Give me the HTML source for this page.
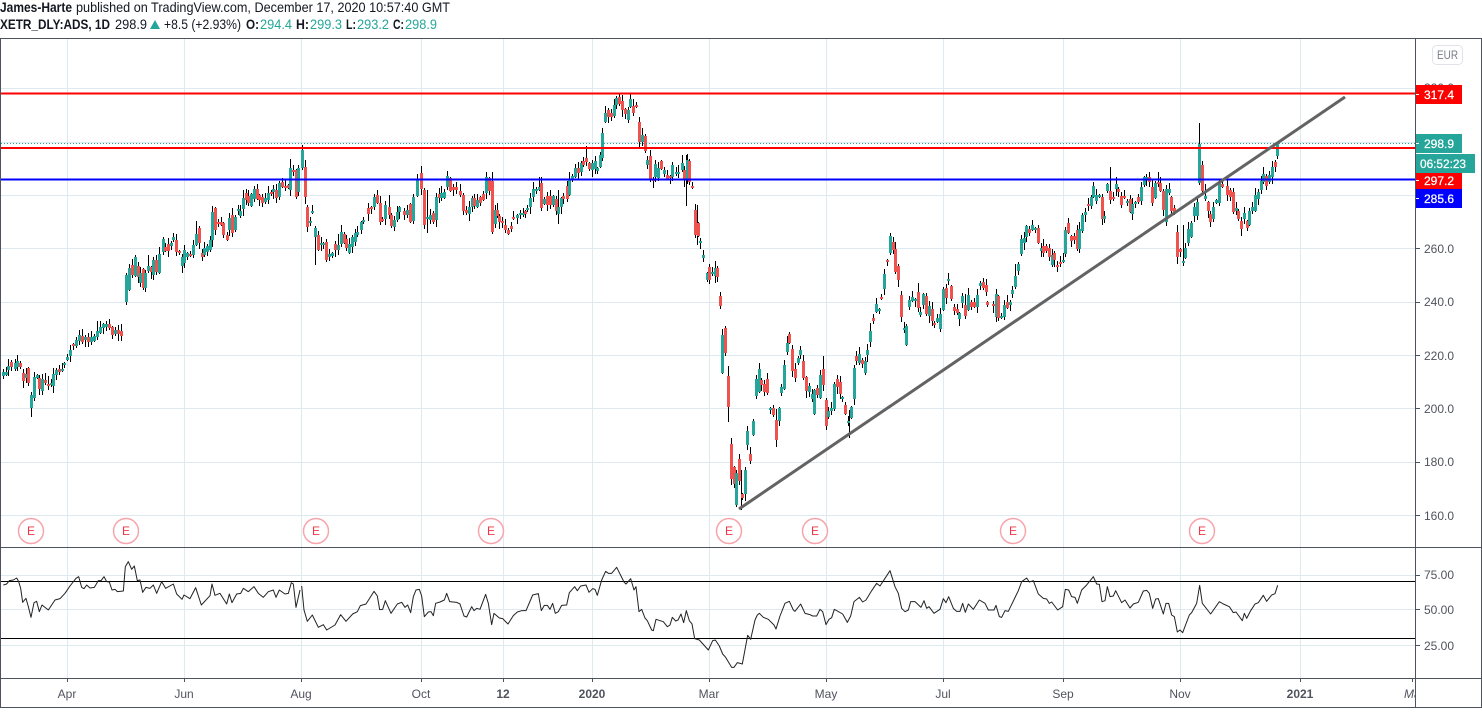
<!DOCTYPE html>
<html>
<head>
<meta charset="utf-8">
<title>XETR_DLY:ADS, 1D</title>
<style>
html,body{margin:0;padding:0;background:#fff;width:1482px;height:712px;overflow:hidden}
svg{display:block;position:absolute;left:0;top:0}
text{font-family:"Liberation Sans",sans-serif}
.ax{font-size:12px;fill:#50535e}
.tm{font-size:12px;fill:#50535e;text-anchor:middle}
.tg{font-size:12px;fill:#fff;stroke:#fff;stroke-width:.25}
.h{font-size:14px;fill:#131722}
.b{font-size:14px;fill:#131722;font-weight:bold}
.t{font-size:14px;fill:#26a69a}
.e{font-size:12px;fill:#f23645;text-anchor:middle}
</style>
</head>
<body>
<svg width="1482" height="712" viewBox="0 0 1482 712" xmlns="http://www.w3.org/2000/svg">
<!-- header -->
<text class="b" x="0" y="12" textLength="72" lengthAdjust="spacingAndGlyphs">James-Harte</text>
<text class="h" x="76" y="12" textLength="374" lengthAdjust="spacingAndGlyphs">published on TradingView.com, December 17, 2020 10:57:40 GMT</text>
<text class="b" x="0" y="29" textLength="110" lengthAdjust="spacingAndGlyphs">XETR_DLY:ADS, 1D</text>
<text class="h" x="115" y="29" textLength="32" lengthAdjust="spacingAndGlyphs">298.9</text>
<path d="M150 29L155 20L160 29Z" fill="#26a69a"/>
<text class="h" x="164" y="29" textLength="77" lengthAdjust="spacingAndGlyphs">+8.5 (+2.93%)</text>
<text class="b" x="246" y="29" textLength="13" lengthAdjust="spacingAndGlyphs">O:</text>
<text class="t" x="260" y="29" textLength="32" lengthAdjust="spacingAndGlyphs">294.4</text>
<text class="b" x="296" y="29" textLength="13" lengthAdjust="spacingAndGlyphs">H:</text>
<text class="t" x="310" y="29" textLength="32" lengthAdjust="spacingAndGlyphs">299.3</text>
<text class="b" x="346" y="29" textLength="10" lengthAdjust="spacingAndGlyphs">L:</text>
<text class="t" x="357" y="29" textLength="32" lengthAdjust="spacingAndGlyphs">293.2</text>
<text class="b" x="393" y="29" textLength="11" lengthAdjust="spacingAndGlyphs">C:</text>
<text class="t" x="405" y="29" textLength="32" lengthAdjust="spacingAndGlyphs">298.9</text>

<!-- grid -->
<g stroke="#dfe9f0" stroke-width="1" shape-rendering="crispEdges">
<path d="M67.5 39V678M184.5 39V678M301.5 39V678M421.5 39V678M503.5 39V678M592.5 39V678M709.5 39V678M826.5 39V678M943.5 39V678M1063.5 39V678M1180.5 39V678M1300.5 39V678"/>
<path d="M1 88.5H1415M1 142.5H1415M1 195.5H1415M1 248.5H1415M1 302.5H1415M1 355.5H1415M1 408.5H1415M1 462.5H1415M1 515.5H1415"/>
<path d="M1 575.5H1415M1 609.5H1415M1 645.5H1415"/>
</g>

<!-- long wicks sit under the candle bodies -->
<path d="M1199.5 123V150M31.5 397V417M728.5 370V422M736.5 480V506M741.5 470V510M686.5 155V206M1110.5 167V190M1177.5 225V262M1183.5 225V266M427.5 190V233M315.5 238V265M849.5 410V438M697.5 205V245M558.5 190V224" stroke="#000" stroke-width="1" fill="none" shape-rendering="crispEdges"/>
<!-- candles -->
<g id="c" shape-rendering="crispEdges"></g>

<!-- level lines -->
<path d="M1 143.5H1415" stroke="#26a69a" stroke-width="1" stroke-dasharray="1 2" fill="none"/>
<path d="M1 93.5H1415M1 148H1415" stroke="#ff0000" stroke-width="2" fill="none" shape-rendering="crispEdges"/>
<path d="M1 179.5H1415" stroke="#0000ff" stroke-width="2" fill="none" shape-rendering="crispEdges"/>
<path d="M739 509L1345 97" stroke="#636363" stroke-width="3" fill="none"/>

<!-- E markers -->
<g fill="#fff" stroke="#f7a5ad" stroke-width="1.5">
<circle cx="31" cy="531" r="12.5"/><circle cx="126" cy="531" r="12.5"/><circle cx="316" cy="531" r="12.5"/><circle cx="491" cy="531" r="12.5"/><circle cx="729" cy="531" r="12.5"/><circle cx="815" cy="531" r="12.5"/><circle cx="1013" cy="531" r="12.5"/><circle cx="1202" cy="531" r="12.5"/>
</g>
<g>
<text class="e" x="31" y="535">E</text><text class="e" x="126" y="535">E</text><text class="e" x="316" y="535">E</text><text class="e" x="491" y="535">E</text><text class="e" x="729" y="535">E</text><text class="e" x="815" y="535">E</text><text class="e" x="1013" y="535">E</text><text class="e" x="1202" y="535">E</text>
</g>

<!-- RSI -->
<path d="M1 581.5H1415M1 638.5H1415" stroke="#000" stroke-width="1" fill="none" shape-rendering="crispEdges"/>
<g fill="none" stroke="#222" stroke-width="1" stroke-linejoin="round">
<polyline vector-effect="non-scaling-stroke" transform="translate(0,510) scale(.33333)" points="10,225 20,222 28,212 40,210 50,204 56,215 62,235 68,277 78,265 85,290 93,322 102,278 110,274 118,305 126,285 145,300 165,270 180,266 195,250 210,228 228,205 236,200 245,232 252,236 260,225 270,234 283,232 295,212 303,212 312,200 320,215 328,216 336,240 345,238 352,245 370,243 376,170 385,155 395,178 403,168 412,212 420,210 428,247 438,232 450,235 460,225 470,250 485,215 497,235 520,222 530,252 546,268 552,255 570,266 587,233 604,285 630,257 636,222 645,256 660,250 680,282 688,252 696,278 710,252 722,250 730,235 745,245 762,230 775,250 790,262 805,245 820,240 828,262 838,240 855,252 865,250 874,218 880,222 888,292 900,240"/>
<polyline vector-effect="non-scaling-stroke" transform="translate(280,550) scale(.33333)" points="65,108 72,180 82,214 97,195 115,232 130,224 140,240 165,225 182,194 198,214 218,192 232,185 241,167 258,162 282,124 292,138 299,179 308,178 316,152 333,190 352,162 365,157 375,172 383,165 392,188 400,140 408,120 418,118 425,138 433,200 445,186 453,185 460,197 467,160 480,156 493,150 500,130 509,155 530,157 540,162 552,198 560,201 575,170 582,182 590,175 600,178 617,133 625,160 635,224 642,190 658,204 668,206 684,222 700,197 712,186 725,182 738,182 758,135 775,131 784,182 793,166 802,166 810,178 818,160 826,190 835,185 845,166 860,165 868,128 884,110 892,122 902,108 918,105 927,127 938,116 945,118 952,136 965,90 977,64 985,70 995,70 1010,52 1032,96 1038,102 1052,86 1062,120 1068,110 1077,185 1085,178 1095,204 1102,212 1115,240 1120,242 1128,208 1150,215 1162,230 1170,225 1177,202 1187,213 1194,210 1203,192 1211,218 1219,182 1228,212 1236,222 1244,266 1258,270 1285,300 1298,272 1306,270 1318,288 1328,312 1337,322 1355,352 1362,352 1372,338 1387,342 1403,256 1412,268 1425,210 1432,195 1438,190 1450,202 1465,208 1482,225 1488,237 1500,198"/>
<polyline vector-effect="non-scaling-stroke" transform="translate(780,550) scale(.33333)" points="0,198 15,160 28,154 40,180 45,184 62,162 75,190 90,194 98,198 110,198 120,178 128,185 138,224 147,208 155,203 163,178 188,192 202,217 212,198 222,155 238,142 248,156 258,150 275,122 290,100 300,108 315,85 330,62 345,110 355,130 365,175 375,185 385,180 392,155 405,155 423,172 432,152 440,175 447,170 462,190 480,178 490,146 498,158 506,140 520,175 530,184 540,184 548,160 556,187 565,162 580,178 598,150 615,160 625,180 642,180 648,166 658,200 665,202 675,182 685,184 715,122 725,95 740,84 748,96 760,92 775,132 790,145 800,147 808,160 815,156 833,180 848,170 856,118 866,120 875,140 885,142 892,160 905,120 920,105 940,80 950,102 958,103 966,155 975,152 982,110 990,140 1000,138 1007,122 1025,158 1035,150 1050,174 1060,162 1075,157 1090,123 1100,121 1108,130 1118,175 1127,147 1135,146 1150,192 1158,160 1166,160 1175,195 1183,200 1192,246 1200,240 1208,248 1228,195 1235,188 1250,160 1259,106 1267,160 1292,192 1318,155 1330,162 1348,170 1360,188 1368,186 1387,212 1393,190 1400,205 1412,182 1425,162 1435,158 1450,136 1460,154 1475,135 1485,131 1493,106"/>
</g>

<!-- time axis labels -->
<text class="tm" x="67" y="698">Apr</text>
<text class="tm" x="184" y="698">Jun</text>
<text class="tm" x="301" y="698">Aug</text>
<text class="tm" x="421" y="698">Oct</text>
<text class="tm" x="503" y="698" font-weight="bold">12</text>
<text class="tm" x="592" y="698" font-weight="bold">2020</text>
<text class="tm" x="709" y="698">Mar</text>
<text class="tm" x="826" y="698">May</text>
<text class="tm" x="943" y="698">Jul</text>
<text class="tm" x="1063" y="698">Sep</text>
<text class="tm" x="1180" y="698">Nov</text>
<text class="tm" x="1300" y="698" font-weight="bold">2021</text>
<text class="ax" x="1404" y="698" font-style="italic">Mar</text>
<rect x="1416" y="679" width="66" height="28" fill="#fff"/>
<rect x="1416" y="39" width="66" height="508" fill="#fff"/>

<!-- frame -->
<g stroke="#4c525e" stroke-width="1" fill="none" shape-rendering="crispEdges">
<path d="M0 38.5H1482M0.5 38V707M1415.5 38V707M0 547.5H1482M0 678.5H1482M0 707.5H1482M1481.5 38V708"/>
<path d="M67.5 678V682M184.5 678V682M301.5 678V682M421.5 678V682M503.5 678V682M592.5 678V682M709.5 678V682M826.5 678V682M943.5 678V682M1063.5 678V682M1180.5 678V682M1300.5 678V682M1412.5 678V682"/>
<path d="M1416 515.5H1420M1416 462.5H1420M1416 408.5H1420M1416 355.5H1420M1416 302.5H1420M1416 248.5H1420M1416 575.5H1420M1416 609.5H1420M1416 645.5H1420"/>
</g>

<!-- price axis -->
<rect x="1432.5" y="45.5" width="30" height="19" rx="4" fill="#fff" stroke="#e0e3eb"/>
<text x="1437" y="59" font-size="12" fill="#787b86" textLength="21" lengthAdjust="spacingAndGlyphs">EUR</text>
<text class="ax" x="1424" y="92">320.0</text>
<text class="ax" x="1424" y="253">260.0</text>
<text class="ax" x="1424" y="306">240.0</text>
<text class="ax" x="1424" y="360">220.0</text>
<text class="ax" x="1424" y="413">200.0</text>
<text class="ax" x="1424" y="466">180.0</text>
<text class="ax" x="1424" y="520">160.0</text>
<text class="ax" x="1424" y="579">75.00</text>
<text class="ax" x="1424" y="614">50.00</text>
<text class="ax" x="1424" y="650">25.00</text>

<rect x="1416" y="85" width="46" height="19" fill="#ff0000"/>
<text class="tg" x="1424" y="99">317.4</text>
<rect x="1416" y="170" width="46" height="19" fill="#ff0000"/>
<text class="tg" x="1424" y="185">297.2</text>
<rect x="1416" y="189" width="46" height="19" fill="#0000ff"/>
<text class="tg" x="1424" y="203">285.6</text>
<rect x="1416" y="134" width="46" height="19" fill="#26a69a"/>
<text class="tg" x="1424" y="148">298.9</text>
<rect x="1416" y="154" width="59" height="19" fill="#26a69a"/>
<text class="tg" x="1420" y="168" textLength="46" lengthAdjust="spacingAndGlyphs">06:52:23</text>
<path d="M1416 94.5H1419M1416 143.5H1419M1416 180.5H1419M1416 198.5H1419" stroke="#fff" stroke-width="1" shape-rendering="crispEdges"/>
</svg>
<script>
var segs=[
[0,340,3,"10g97,107 17g97,104 25g78,90 34r65,82 44g70,87 52g63,80 61r68,82 68r98,122 77g102,114 85r84,130 94g165,205 103g110,173 110g104,115 118r113,147 127g118,152 136r120,130 143r132,137 152g128,135 160g103,138 169g90,104 177r87,95 186g87,92 193g70,74 202g50,60 211g30,47 220r12,17 227g0,17"],
[0,0,1,"79g335,341 82r336,342 85g337,340 88r337,342 91g337,342 94g336,341 97g331,337 100g327,333 103g324,328 106g324,327 109r324,328 112r327,335 115g330,334 118r330,334 121r331,336"],
[120,140,3,"19g405,486 27g385,450 35r376,404 44g352,408 53r378,410 61g400,430 68r388,445 76g400,445 85g378,392 93r380,395 100g360,404 109r360,395 118g342,400 128g297,335 136r320,332 143r312,332 152g310,317 160g292,300 169r300,335 178r334,340 185g352,378 193g330,370 200g340,350 211r342,347 220g316,345 227g282,315 236r264,308 245r340,350 253g325,345 260g318,335 269g300,330 277g216,300 286r205,270 293r245,252 302r246,254 310r248,285 320r285,300 328g234,270 337r225,278 344g232,270 353g207,213 361g214,228 370g175,207 377r160,180 385r168,188 394g162,197 403g148,178 412r148,178 418r165,180 427r170,190 436g175,185 445g158,180 453r155,160 460g148,157 469r150,173 478g130,172 487r125,140 495r137,145 503r135,145 511g85,150 519r90,95 529r90,170 535g85,155 545g30,85"],
[300,90,3,"14r230,320 22r350,412 31g392,400 37g362,370 46g415,440 55r435,480 64g458,466 70g458,466 79r457,510 88g492,500 97g490,498 106r462,480 115g465,480 122g425,462 131r432,458 139r447,475 148g462,490 156g440,470 164g430,457 172g426,434 182g397,420 190g390,395 205r355,372 214r350,355 223g320,352 232r315,340 240r338,395 247r386,391 256g345,388 266r350,375 274r375,408 281g390,410 290g365,390 298g350,365 313r362,375 322g360,375 331r342,397 340g322,392 350g268,318 364r250,298 373r300,405 382g380,388 390g375,390 398r370,395 407g320,390 416r312,325 424g310,325 433g305,325 440g258,290 449r265,302 458r290,300 467r292,300 480r302,315 490r315,362 499r360,368 507g350,372 515g325,350 523r325,348 532g330,352 541r322,340 549r312,330 557g262,310 566r265,303 575r272,425 584g360,402 590r360,378 598r378,396 606r392,398 616r405,420 625r420,432 632r408,416 640r382,386 650g375,385 660g370,376 668g370,376 674r362,372 682g353,358 690g325,350 700g296,320 708g296,302 716g290,300 724r280,353 733g327,342 742r318,345 750r318,345 758g318,345 767r326,362 775g350,372 784g325,352 790r318,328 800r288,328 808g266,316 816g258,268 826g233,262 833r233,250 842g220,246 850r213,225 859r203,217 867r220,236 875g218,240 884g214,236 892g233,243 900g196,232 907g128,205 916g70,96 925r60,80 934r68,80 942g45,78 948g25,45 958r20,42 967r32,60 976r58,72 985g60,90 991g28,50 1000r48,68 1009r45,50 1018r96,155 1026g135,155 1034r138,182 1042g210,226 1051r198,270 1060r266,271 1066g222,262 1075g235,265 1084r212,236 1093g240,252 1102r255,266 1110r258,263 1117g225,262 1127g246,251 1135g246,251 1145g218,240 1152r240,270 1160g210,268 1168r212,275 1177r288,293 1186r360,435 1193r400,438 1201g453,458 1210g495,503 1220g550,570 1228r530,570 1236g546,552 1244g535,558 1252r535,562"],
[0,0,1,"720r296,306"],
[700,300,3,"67g105,220 76r85,160 85r228,320 94r432,537 103r502,552 109g518,615 118r477,542 127r582,594 136g510,582 142g393,435 151r462,483 160g363,405 169g237,287 178g207,277 184r240,255 193r252,275 202r238,278 211g325,331 220r323,345 227r360,420 236g323,363 244g262,278 253g195,268 262g128,156 268r102,128 277r148,213 286r208,233 295g174,188 301g150,165 310r183,235 319r232,272 328g258,275 337g283,298 343g270,342 352r264,284 361g225,293 370r208,255 379r300,378 385g333,350 394g323,332 403g252,327 412r238,262 421r246,282 427g290,295 436r315,342 445g363,368 454g322,354 461g204,298 469r167,183 478g162,188 487r180,192 496g183,218"],
[860,160,3,"22g570,585 31g513,545 40r475,483 48g432,455 58g446,452 64r412,416 73g342,387 82r301,305 91g228,278 100r246,270 106r266,335 115r318,360 124r405,470 133g503,507 139g498,555 148g420,440 157g412,422 166g416,422 175r396,445 181g456,465 190g402,435 199r407,462 208g438,467 217r448,483 223r488,494 232g475,485 241g462,507 250g387,450 259r385,414 265g358,362 274r378,418 283r440,452 292r446,460 298g460,478 307g408,430 316r435,467 325g405,450 334r425,442 342r425,442 350g405,440 359g370,378 368r365,385 377r375,395 382r427,435 400r431,435 409g403,470 415r408,473 424g468,472 433g435,470 442r427,445 451g427,434 457g390,402 466g348,380 475g313,333 484g237,282 493g235,248 499g198,232 508r207,218 517g196,210 526g203,208 535r205,250 542g264,272 550r258,278 559r258,274 568r265,292 575g285,314 583r280,300 592r315,320 601r305,309 610g301,305 616g210,282 625r190,220 634r227,242 643r227,240 650r210,266 658g208,266 667g165,212 676g156,165 685r132,136 694g110,137 700g78,110 709g105,122 718g105,112 727r112,177 733g168,177 742g72,93 751r93,119 760r112,116 769g72,86 775r88,95 784r108,134 793r108,113 802g123,128 811r118,155 817g132,162 826g126,130 835r110,125 844g80,123 853g52,75 859g50,56 868r52,65 877r82,128 886g70,114 895r66,70"],
[1140,110,3,"61r220,243 70r243,300 79g237,335 88g237,248 94r262,303 103r295,310 112r366,440 121r418,425 130g454,458 136g415,443 145g358,400 154g340,382 163g292,317 172g275,317 178g101,218 187r166,242 196g258,266 205r277,303 211r313,335 220g292,327 229g270,280 238g218,278 247r222,232 262r228,255 271r240,260 280r247,305 289g294,302 295r302,326 304r333,357 313g310,327 322r332,353 328g303,345 337g292,303 346g255,303 355g247,267 364g213,240 370g193,217 379r198,227 388g195,216 397g172,200 406r156,170 412g97,137"]
];
var out="",n=0;
segs.forEach(function(s){
  s[3].split(" ").forEach(function(t){
    var m=t.match(/^(\d+)([gr])(\d+),(\d+)$/);if(!m)return;
    n++;
    var x=Math.round(s[0]+m[1]/s[2]),
        a=Math.round(s[1]+m[3]/s[2]),
        b=Math.round(s[1]+m[4]/s[2]);
    if(b-a<2)b=a+2;
    var u=1+(n*7919%13)%7,d=1+(n*104729%11)%7;
    var big=n*31%17===0?6:0;
    var c=m[2]==="g"?"#26a69a":"#ef5350";
    var wt=a-u-big;
    if(x>=1240&&wt<143)wt=143;
    out+='<rect x="'+x+'" y="'+wt+'" width="1" height="'+(b-wt+d)+'" fill="#000"/>';
    out+='<rect x="'+(x-1)+'" y="'+a+'" width="3" height="'+(b-a)+'" fill="'+c+'"/>';
  });
});
document.getElementById("c").innerHTML=out;
</script>
</body>
</html>
